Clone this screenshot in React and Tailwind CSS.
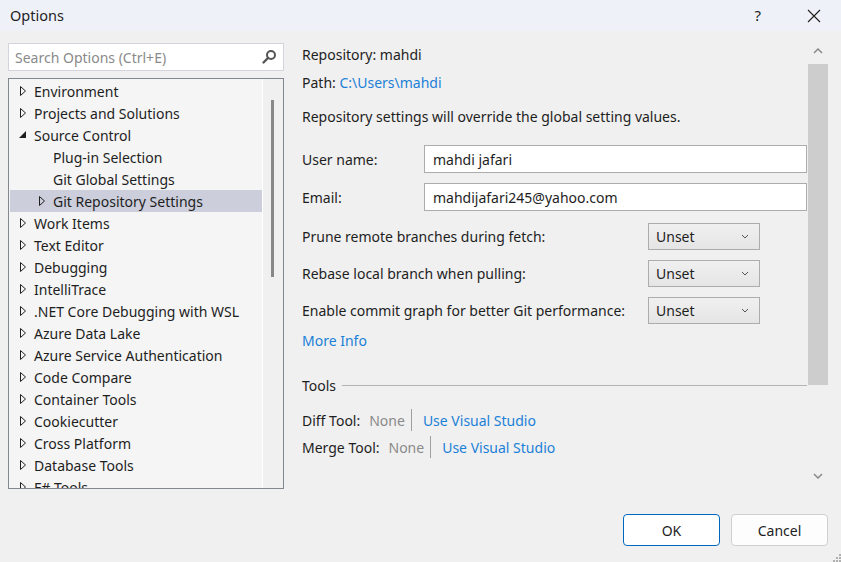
import React from 'react'

const font = { fontFamily: '"Noto Sans", "Open Sans", sans-serif' }

const treeItems = [
  { label: 'Environment', level: 0, icon: 'closed' },
  { label: 'Projects and Solutions', level: 0, icon: 'closed' },
  { label: 'Source Control', level: 0, icon: 'open' },
  { label: 'Plug-in Selection', level: 1, icon: 'none' },
  { label: 'Git Global Settings', level: 1, icon: 'none' },
  { label: 'Git Repository Settings', level: 1, icon: 'closed', selected: true },
  { label: 'Work Items', level: 0, icon: 'closed' },
  { label: 'Text Editor', level: 0, icon: 'closed' },
  { label: 'Debugging', level: 0, icon: 'closed' },
  { label: 'IntelliTrace', level: 0, icon: 'closed' },
  { label: '.NET Core Debugging with WSL', level: 0, icon: 'closed' },
  { label: 'Azure Data Lake', level: 0, icon: 'closed' },
  { label: 'Azure Service Authentication', level: 0, icon: 'closed' },
  { label: 'Code Compare', level: 0, icon: 'closed' },
  { label: 'Container Tools', level: 0, icon: 'closed' },
  { label: 'Cookiecutter', level: 0, icon: 'closed' },
  { label: 'Cross Platform', level: 0, icon: 'closed' },
  { label: 'Database Tools', level: 0, icon: 'closed' },
  { label: 'F# Tools', level: 0, icon: 'closed' },
]

const Arrow = ({ kind }) => {
  if (kind === 'none') return <span className="w-[19px] shrink-0" />
  if (kind === 'open')
    return (
      <svg width="19" height="22" viewBox="0 0 19 22" className="shrink-0">
        <polygon points="16,7 16,14 9,14" fill="#1e1e1e" />
      </svg>
    )
  return (
    <svg width="19" height="22" viewBox="0 0 19 22" className="shrink-0">
      <polygon points="10.5,6.5 15.5,11 10.5,15.5" fill="none" stroke="#1e1e1e" strokeWidth="1" />
    </svg>
  )
}

const Dropdown = () => (
  <div className="w-[112px] h-[27px] border border-[#acacac] bg-gradient-to-b from-[#f0f0f0] to-[#e5e5e5] flex items-center justify-between pl-[7px] pr-[10px]">
    <span>Unset</span>
    <svg width="8" height="5" viewBox="0 0 8 5">
      <polyline points="1,1 4,4 7,1" fill="none" stroke="#555" strokeWidth="1" />
    </svg>
  </div>
)

const ToolRow = ({ label, className }) => (
  <div className={`h-[24px] flex items-center ${className}`}>
    <span>{label}</span>
    <span className="ml-[9px] text-[#8a8a8a]">None</span>
    <span className="ml-[6px] w-px h-[22px] bg-[#a0a0a0]" />
    <span className="ml-[11px] text-[#1b80d7]">Use Visual Studio</span>
  </div>
)

export default function App() {
  return (
    <div style={font} className="w-[841px] h-[562px] bg-[#f0f0f0] text-[#1e1e1e] text-[14px] flex flex-col overflow-hidden relative">
      {/* title bar */}
      <div className="h-[31px] bg-[#eef2f8] flex items-center shrink-0">
        <span className="pl-[10px] text-[14.5px]">Options</span>
        <span className="ml-auto mr-[46px] text-[15px]">?</span>
        <svg width="14" height="14" viewBox="0 0 14 14" className="mr-[20px]">
          <path d="M1 1 L13 13 M13 1 L1 13" stroke="#1e1e1e" strokeWidth="1.1" />
        </svg>
      </div>

      <div className="flex h-[470px] shrink-0">
        {/* left panel */}
        <div className="ml-[8px] w-[276px] pt-[12px] flex flex-col">
          <div className="h-[28px] border border-[#d4d4dc] bg-white flex items-center pl-[6px] pr-[6px]">
            <span className="text-[#8a8a8a]">Search Options (Ctrl+E)</span>
            <svg width="16" height="16" viewBox="0 0 16 16" className="ml-auto">
              <circle cx="10" cy="6" r="4" fill="none" stroke="#555" strokeWidth="2" />
              <line x1="7" y1="9" x2="2.5" y2="13.5" stroke="#555" strokeWidth="2.4" strokeLinecap="round" />
            </svg>
          </div>
          <div className="mt-[7px] h-[411px] border border-[#828790] bg-[#f5f5f5] flex overflow-hidden">
            <div className="flex-1 pt-[1px] pl-[1px] overflow-hidden">
              {treeItems.map((item) => (
                <div
                  key={item.label}
                  className={`h-[22px] flex items-center whitespace-nowrap ${item.selected ? 'bg-[#cccedb]' : ''}`}
                  style={{ paddingLeft: item.level * 19 }}
                >
                  <Arrow kind={item.icon} />
                  <span className="pl-[5px]">{item.label}</span>
                </div>
              ))}
            </div>
            <div className="w-[21px] bg-[#f0f0f0] border-l border-white pt-[21px] pl-[8px]">
              <div className="w-[3px] h-[177px] bg-[#888888]" />
            </div>
          </div>
        </div>

        {/* right panel */}
        <div className="ml-[18px] w-[505px] pt-[11px] flex flex-col">
          <div className="h-[24px] flex items-center">Repository: mahdi</div>
          <div className="h-[24px] mt-[4px] flex items-center">
            Path:&nbsp;<span className="text-[#1b80d7]">C:\Users\mahdi</span>
          </div>
          <div className="h-[24px] mt-[10px] flex items-center">
            Repository settings will override the global setting values.
          </div>
          <div className="h-[28px] mt-[17px] flex items-center">
            <span className="w-[122px]">User name:</span>
            <div className="flex-1 h-[28px] border border-[#acacac] bg-white flex items-center pl-[8px]">mahdi jafari</div>
          </div>
          <div className="h-[28px] mt-[10px] flex items-center">
            <span className="w-[122px]">Email:</span>
            <div className="flex-1 h-[28px] border border-[#acacac] bg-white flex items-center pl-[8px]">mahdijafari245@yahoo.com</div>
          </div>
          <div className="h-[27px] mt-[12px] flex items-center">
            <span className="w-[346px]">Prune remote branches during fetch:</span>
            <Dropdown />
          </div>
          <div className="h-[27px] mt-[10px] flex items-center">
            <span className="w-[346px]">Rebase local branch when pulling:</span>
            <Dropdown />
          </div>
          <div className="h-[27px] mt-[10px] flex items-center">
            <span className="w-[346px]">Enable commit graph for better Git performance:</span>
            <Dropdown />
          </div>
          <div className="h-[24px] mt-[4px] flex items-center text-[#1b80d7]">More Info</div>
          <div className="h-[24px] mt-[21px] flex items-center">
            <span>Tools</span>
            <div className="flex-1 h-px bg-[#b4b4b4] ml-[6px] mt-[1px]" />
          </div>
          <ToolRow label="Diff Tool:" className="mt-[11px]" />
          <ToolRow label="Merge Tool:" className="mt-[3px]" />
        </div>

        {/* right scrollbar */}
        <div className="w-[21px] pt-[17px] flex flex-col items-center">
          <svg width="10" height="6" viewBox="0 0 10 6">
            <polyline points="1,5 5,1 9,5" fill="none" stroke="#8a8a8a" strokeWidth="1.5" />
          </svg>
          <div className="mt-[10px] w-[20px] h-[321px] bg-[#cdcdcd]" />
          <svg width="10" height="6" viewBox="0 0 10 6" className="mt-[88px]">
            <polyline points="1,1 5,5 9,1" fill="none" stroke="#8a8a8a" strokeWidth="1.5" />
          </svg>
        </div>
      </div>

      {/* footer */}
      <div className="flex justify-end gap-[11px] pr-[13px] pt-[13px]">
        <button className="w-[97px] h-[32px] rounded-[4px] border border-[#0067c0] bg-white">OK</button>
        <button className="w-[97px] h-[32px] rounded-[4px] border border-[#d0d0d0] bg-[#fdfdfd]">Cancel</button>
      </div>

      {/* resize grip */}
      <svg width="8" height="8" viewBox="0 0 8 8" className="absolute right-0 bottom-0">
        <rect x="6" y="0" width="2" height="2" fill="#b0b0b0" />
        <rect x="3" y="3" width="2" height="2" fill="#b0b0b0" />
        <rect x="6" y="3" width="2" height="2" fill="#b0b0b0" />
        <rect x="0" y="6" width="2" height="2" fill="#b0b0b0" />
        <rect x="3" y="6" width="2" height="2" fill="#b0b0b0" />
        <rect x="6" y="6" width="2" height="2" fill="#b0b0b0" />
      </svg>
    </div>
  )
}
